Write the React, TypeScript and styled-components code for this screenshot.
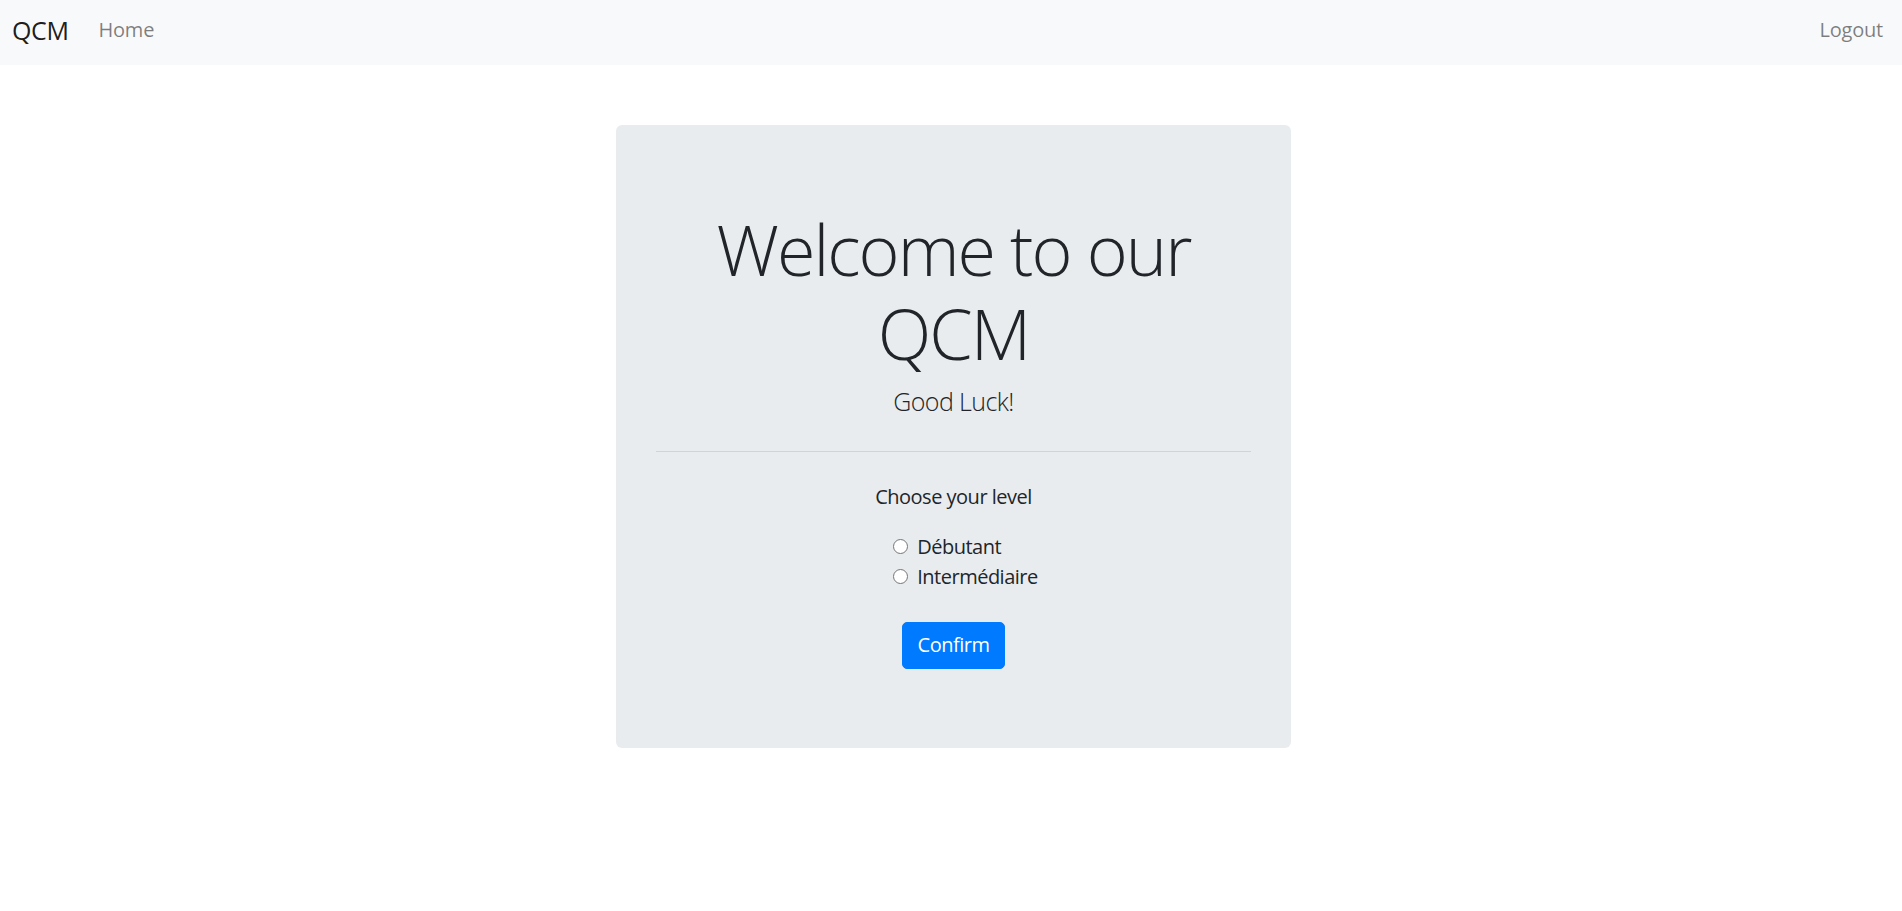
import React from "react";
import styled, { createGlobalStyle } from "styled-components";

const GlobalStyle = createGlobalStyle`
  *, *::before, *::after { box-sizing: border-box; }
  html, body {
    margin: 0;
    padding: 0;
    background: #ffffff;
  }
  body {
    font-family: "Open Sans", "Noto Sans", "Liberation Sans", sans-serif;
    font-size: 20px;
    line-height: 1.5;
    letter-spacing: -0.5px;
    color: #212529;
  }
`;

const Navbar = styled.nav`
  display: flex;
  align-items: flex-start;
  height: 65px;
  padding: 15px 9px 0 12px;
  background: #f8f9fa;
`;

const Brand = styled.a`
  font-size: 25px;
  line-height: 30px;
  letter-spacing: -0.4px;
  color: rgba(0, 0, 0, 0.9);
  text-decoration: none;
  margin-right: 20px;
`;

const NavLinks = styled.div`
  display: flex;
  flex: 1;
`;

const NavLink = styled.a<{ $push?: boolean }>`
  padding: 0 10px;
  font-size: 20px;
  line-height: 30px;
  letter-spacing: -0.2px;
  color: rgba(0, 0, 0, 0.5);
  text-decoration: none;
  margin-left: ${(p) => (p.$push ? "auto" : "0")};
`;

const Main = styled.main`
  display: flex;
  justify-content: center;
  padding: 60px 0 0 5px;
`;

const Jumbotron = styled.section`
  width: 675px;
  background: #e9ecef;
  border-radius: 6px;
  padding: 82px 40px 79px;
  text-align: center;
`;

const Heading = styled.h1`
  margin: 0 0 8px;
  font-size: 70px;
  font-weight: 300;
  line-height: 1.2;
  letter-spacing: -2px;
`;

const Lead = styled.p`
  margin: 0;
  font-size: 25px;
  font-weight: 300;
  line-height: 1.5;
  letter-spacing: -0.6px;
`;

const Divider = styled.hr`
  margin: 30px 0;
  border: 0;
  border-top: 1px solid rgba(0, 0, 0, 0.1);
`;

const Prompt = styled.p`
  margin: 0 0 20px;
  font-size: 20px;
  line-height: 30px;
`;

const RadioWrap = styled.div`
  display: flex;
  justify-content: center;
  margin-bottom: 30px;
`;

const RadioGroup = styled.div`
  display: flex;
  flex-direction: column;
  align-items: flex-start;
  padding-left: 24px;
`;

const RadioRow = styled.label`
  display: flex;
  align-items: center;
  gap: 9px;
  height: 30px;
  font-size: 20px;
  line-height: 30px;
  cursor: pointer;
`;

const Radio = styled.input`
  appearance: none;
  width: 15px;
  height: 15px;
  margin: -1px 0 0;
  border: 1px solid #767676;
  border-radius: 50%;
  background: #ffffff;
  cursor: pointer;

  &:checked {
    border: 4px solid #0075ff;
  }
`;

const ButtonRow = styled.div`
  display: flex;
  justify-content: center;
`;

const Button = styled.button`
  font-family: inherit;
  font-size: 20px;
  line-height: 30px;
  letter-spacing: -0.5px;
  padding: 7.5px 15px;
  border: 1px solid #007bff;
  border-radius: 5px;
  background: #007bff;
  color: #ffffff;
  cursor: pointer;
`;

const levels = ["Débutant", "Intermédiaire"];

export default function App() {
  return (
    <>
      <GlobalStyle />
      <Navbar>
        <Brand href="#">QCM</Brand>
        <NavLinks>
          <NavLink href="#">Home</NavLink>
          <NavLink href="#" $push>
            Logout
          </NavLink>
        </NavLinks>
      </Navbar>
      <Main>
        <Jumbotron>
          <Heading>Welcome to our QCM</Heading>
          <Lead>Good Luck!</Lead>
          <Divider />
          <Prompt>Choose your level</Prompt>
          <RadioWrap>
            <RadioGroup>
              {levels.map((l) => (
                <RadioRow key={l}>
                  <Radio type="radio" name="level" value={l} />
                  {l}
                </RadioRow>
              ))}
            </RadioGroup>
          </RadioWrap>
          <ButtonRow>
            <Button type="button">Confirm</Button>
          </ButtonRow>
        </Jumbotron>
      </Main>
    </>
  );
}
